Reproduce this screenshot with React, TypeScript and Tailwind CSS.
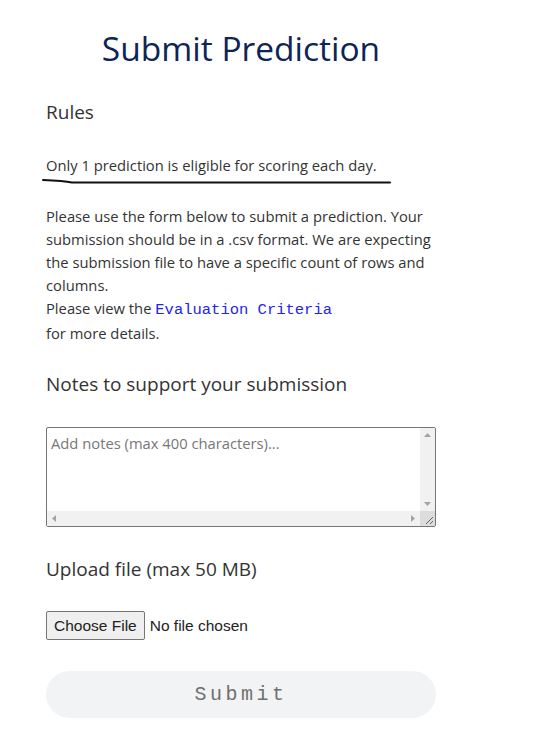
import React from 'react'

const App: React.FC = () => {
  return (
    <div className="min-h-screen bg-white font-['Open_Sans',sans-serif] text-[#333]">
      <div className="w-[390px] ml-[46px] pt-[25px]">
        <h1 className="text-center text-[33.5px] leading-[46px] text-[#0d2556]">Submit Prediction</h1>

        {/* Rules */}
        <h2 className="mt-[28px] text-[19px] leading-[26px]">Rules</h2>
        <div className="mt-[29px]">
          <p className="text-[14.75px] leading-[22px]">Only 1 prediction is eligible for scoring each day.</p>
          <svg className="mt-[2px] -ml-[4px] block" width="350" height="8" viewBox="0 0 350 8">
            <path
              d="M1 2 C 12 2.5, 22 3, 30 4.5 L 348 4.5"
              fill="none"
              stroke="#111"
              strokeWidth="2"
              strokeLinecap="round"
            />
          </svg>
        </div>

        <div className="mt-[19px] text-[14.75px] leading-[23px]">
          <p>
            Please use the form below to submit a prediction. Your submission should be in a .csv format. We are
            expecting the submission file to have a specific count of rows and columns.
          </p>
          <p>
            Please view the{' '}
            <a href="#" className="font-['Liberation_Mono',monospace] text-[15.5px] text-[#2424f0]">
              Evaluation Criteria
            </a>
          </p>
          <p>for more details.</p>
        </div>

        {/* Notes */}
        <h2 className="mt-[26px] text-[19px] leading-[26px]">Notes to support your submission</h2>
        <div className="mt-[30px] w-[390px] h-[100px] border border-[#767676] rounded-[2px] flex flex-col overflow-hidden">
          <div className="flex flex-1 min-h-0">
            <textarea
              className="flex-1 min-w-0 px-[4px] pt-[5px] pb-[2px] text-[14.75px] leading-[20px] resize-none placeholder:text-[#777] outline-none"
              placeholder="Add notes (max 400 characters)..."
            />
            <div className="w-[15px] bg-[#f1f1f1] flex flex-col justify-between items-center py-[5px]">
              <svg width="7" height="4" viewBox="0 0 7 4">
                <path d="M0 4 L3.5 0 L7 4 Z" fill="#a3a3a3" />
              </svg>
              <svg width="7" height="4" viewBox="0 0 7 4">
                <path d="M0 0 L3.5 4 L7 0 Z" fill="#a3a3a3" />
              </svg>
            </div>
          </div>
          <div className="flex h-[15px]">
            <div className="flex-1 bg-[#f1f1f1] flex justify-between items-center px-[5px]">
              <svg width="4" height="7" viewBox="0 0 4 7">
                <path d="M4 0 L0 3.5 L4 7 Z" fill="#a3a3a3" />
              </svg>
              <svg width="4" height="7" viewBox="0 0 4 7">
                <path d="M0 0 L4 3.5 L0 7 Z" fill="#a3a3a3" />
              </svg>
            </div>
            <div className="w-[15px] bg-[#dcdcdc]">
              <svg width="15" height="15" viewBox="0 0 15 15">
                <path d="M13 6 L6 13 M13 10 L10 13" stroke="#666" strokeWidth="1" />
              </svg>
            </div>
          </div>
        </div>

        {/* Upload */}
        <h2 className="mt-[29px] text-[19px] leading-[26px]">Upload file (max 50 MB)</h2>
        <input
          type="file"
          className="mt-[29px] block text-[15.5px] font-['Liberation_Sans',sans-serif] text-[#222] file:mr-[5px] file:px-[7px] file:py-[2px] file:border file:border-[#767676] file:rounded-[2px] file:bg-[#efefef] file:text-[#222]"
        />

        <button
          disabled
          className="mt-[31px] w-[390px] h-[47px] rounded-full bg-[#f2f3f5] font-['Liberation_Mono',monospace] text-[20px] tracking-[3.5px] text-[#707070]"
        >
          Submit
        </button>
      </div>
    </div>
  )
}

export default App
